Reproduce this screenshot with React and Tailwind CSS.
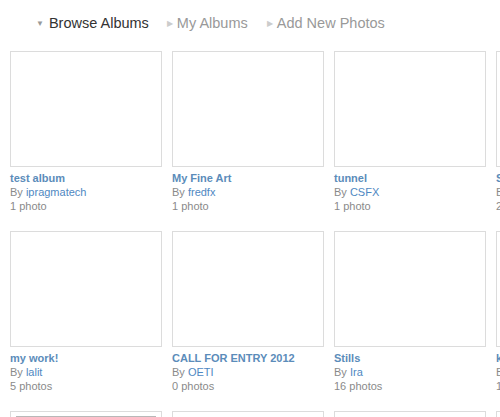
import React from "react";

const rows = [
  [
    { t: "test album", u: "ipragmatech", c: "1 photo" },
    { t: "My Fine Art", u: "fredfx", c: "1 photo" },
    { t: "tunnel", u: "CSFX", c: "1 photo" },
    { t: "Summer", u: "Sam", c: "2 photos" },
  ],
  [
    { t: "my work!", u: "lalit", c: "5 photos" },
    { t: "CALL FOR ENTRY 2012", u: "OETI", c: "0 photos" },
    { t: "Stills", u: "Ira", c: "16 photos" },
    { t: "kids", u: "Bob", c: "12 photos" },
  ],
  [
    { t: "Travel", u: "anna", c: "3 photos", img: true },
    { t: "Nature", u: "joe", c: "4 photos" },
    { t: "City", u: "max", c: "7 photos" },
    { t: "Misc", u: "tom", c: "1 photo" },
  ],
];

function Card({ a }) {
  return (
    <div className="w-[152px] shrink-0">
      <div className="h-[116px] border border-[#dcdcdc] bg-white relative">
        {a.img && (
          <div className="absolute left-[5px] right-[5px] top-[4px] h-[110px] border-t-2 border-[#b8b8b8] bg-gradient-to-b from-[#e8e8e8] to-white" />
        )}
      </div>
      <div className="mt-[4px] text-[11px] leading-[14px] font-['Liberation_Sans',Arial,sans-serif]">
        <div className="font-bold text-[#5b8cba] whitespace-nowrap">{a.t}</div>
        <div className="text-[#8a8a8a] whitespace-nowrap">
          By <span className="text-[#4f88c2]">{a.u}</span>
        </div>
        <div className="text-[#8a8a8a] whitespace-nowrap">{a.c}</div>
      </div>
    </div>
  );
}

export default function App() {
  return (
    <div className="w-[500px] h-[417px] overflow-hidden bg-white font-['Liberation_Sans',Arial,sans-serif]">
      <div className="flex items-center h-[46px] pl-[36px] pt-[1px] text-[14.5px]">
        <span className="text-[#999] text-[8px] mr-[5px] leading-none">▼</span>
        <span className="text-[#333]">Browse Albums</span>
        <span className="text-[#ccc] text-[8px] ml-[18px] mr-[4px] leading-none">▶</span>
        <span className="text-[#999]">My Albums</span>
        <span className="text-[#ccc] text-[8px] ml-[19px] mr-[4px] leading-none">▶</span>
        <span className="text-[#999]">Add New Photos</span>
      </div>
      <div className="pl-[10px] pt-[5px] flex flex-col gap-[18px]">
        {rows.map((r, i) => (
          <div key={i} className="flex gap-[10px]">
            {r.map((a, j) => (
              <Card key={j} a={a} />
            ))}
          </div>
        ))}
      </div>
    </div>
  );
}
